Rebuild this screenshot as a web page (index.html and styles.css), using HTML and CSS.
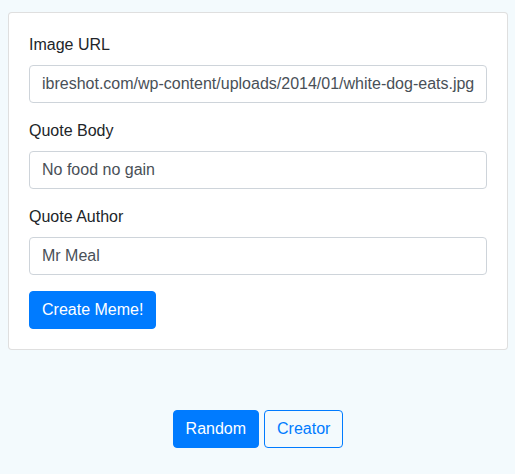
FILE: index.html
```html
<!DOCTYPE html>
<html lang="en">
<head>
<meta charset="utf-8">
<title>Meme Generator</title>
<link rel="stylesheet" href="styles.css">
</head>
<body>
<div class="app">
  <form class="card">
    <div class="form-group">
      <label class="label" for="url">Image URL</label>
      <input class="control" id="url" type="text" value="ibreshot.com/wp-content/uploads/2014/01/white-dog-eats.jpg">
    </div>
    <div class="form-group">
      <label class="label" for="body">Quote Body</label>
      <input class="control" id="body" type="text" value="No food no gain">
    </div>
    <div class="form-group">
      <label class="label" for="author">Quote Author</label>
      <input class="control" id="author" type="text" value="Mr Meal">
    </div>
    <button class="btn btn-primary" type="button">Create Meme!</button>
  </form>
  <nav class="nav">
    <button class="btn btn-primary" type="button">Random</button>
    <button class="btn btn-outline" type="button">Creator</button>
  </nav>
</div>
</body>
</html>
```
FILE: styles.css
```css
* { box-sizing: border-box; }
html, body { margin: 0; }
body {
  background: #f3fafd;
  font-family: "Liberation Sans", Arial, Helvetica, sans-serif;
  font-size: 16px;
  line-height: 24px;
  color: #212529;
}
.app {
  padding: 12px 7px 0 8px;
}
.card {
  display: block;
  background: #fff;
  border: 1px solid rgba(0,0,0,.125);
  border-radius: 4px;
  padding: 20px;
  margin: 0;
}
.form-group {
  margin-bottom: 16px;
}
.label {
  display: block;
  margin-bottom: 8px;
}
.control {
  display: block;
  width: 100%;
  height: 38px;
  padding: 6px 12px;
  font: inherit;
  line-height: 24px;
  color: #495057;
  background: #fff;
  border: 1px solid #ced4da;
  border-radius: 4px;
  outline: none;
}
.btn {
  display: inline-block;
  height: 38px;
  padding: 6px 12px;
  font: inherit;
  line-height: 24px;
  border: 1px solid transparent;
  border-radius: 4px;
  cursor: pointer;
}
.btn-primary {
  background: #007bff;
  border-color: #007bff;
  color: #fff;
}
.btn-outline {
  background: transparent;
  border-color: #007bff;
  color: #007bff;
}
.nav {
  display: flex;
  justify-content: center;
  gap: 5px;
  margin-top: 60px;
}
```
